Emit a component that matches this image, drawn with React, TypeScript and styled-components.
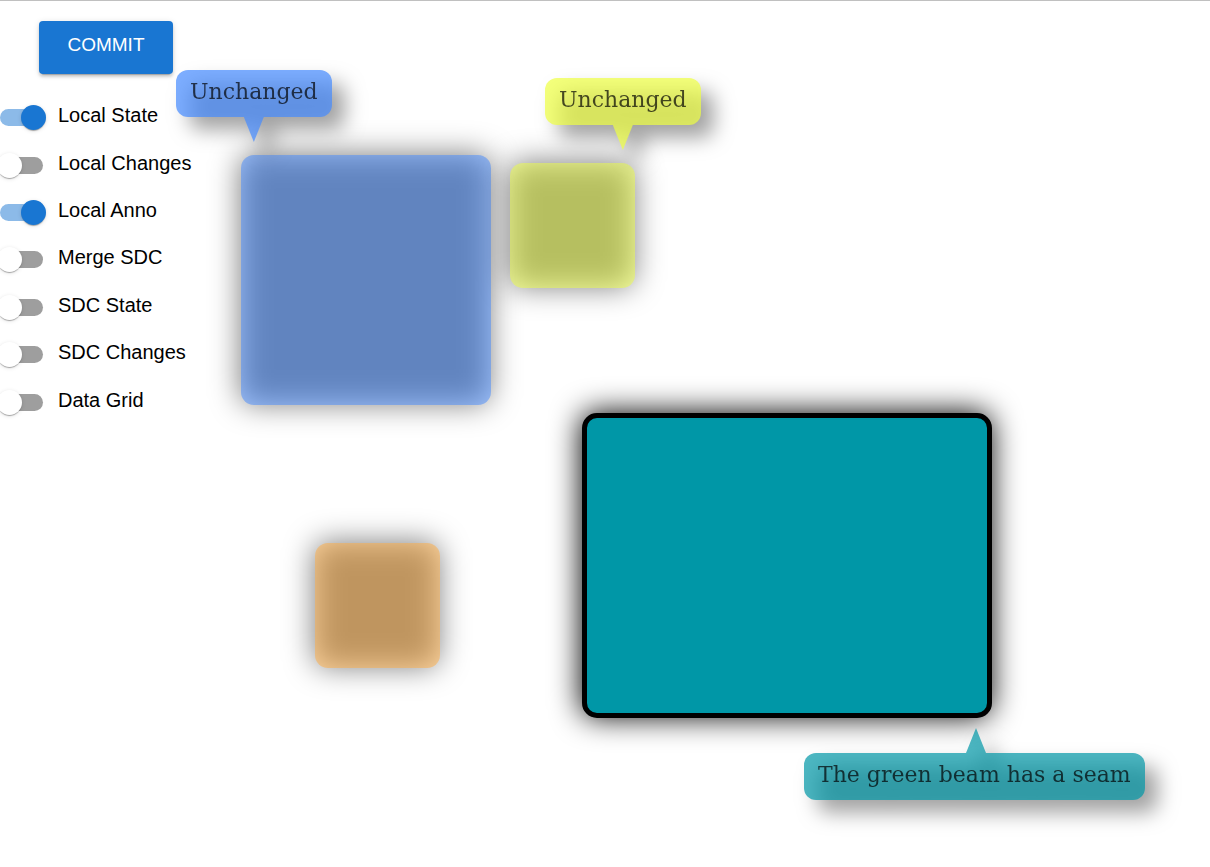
import React, { useState } from "react";
import styled, { createGlobalStyle, css } from "styled-components";

const GlobalStyle = createGlobalStyle`
  * { box-sizing: border-box; }
  body {
    margin: 0;
    background: #fff;
    color: #000;
    font-family: "Liberation Sans", Arial, sans-serif;
  }
`;

const Page = styled.div`
  display: grid;
  min-height: 100vh;
  border-top: 1px solid #c0c0c0;
  overflow: hidden;
`;

const Sidebar = styled.aside`
  grid-area: 1 / 1;
  justify-self: start;
  display: flex;
  flex-direction: column;
  align-items: flex-start;
  gap: 20px;
  padding-top: 20px;
`;

const CommitButton = styled.button`
  min-width: 134px;
  margin-left: 39px;
  padding: 10px 28px 16px;
  border: 0;
  border-radius: 4px;
  background: #1976d2;
  color: #fff;
  font-family: inherit;
  font-size: 19px;
  line-height: 27px;
  text-transform: uppercase;
  cursor: pointer;
  box-shadow:
    0 4px 1px -3px rgba(0, 0, 0, 0.2),
    0 3px 3px rgba(0, 0, 0, 0.14),
    0 1px 6px rgba(0, 0, 0, 0.12);
`;

const SwitchList = styled.div`
  display: grid;
  grid-auto-rows: 1fr;
  min-height: 332px;
`;

const SwitchRow = styled.label`
  display: flex;
  align-items: center;
  gap: 15px;
  font-size: 20px;
  line-height: 30px;
  cursor: pointer;
`;

const SwitchInput = styled.input`
  appearance: none;
  position: relative;
  width: 43px;
  height: 17px;
  margin: 0;
  border-radius: 9px;
  background: #9e9e9e;
  cursor: pointer;

  &::before {
    content: "";
    position: absolute;
    top: -4px;
    left: -3px;
    width: 25px;
    height: 25px;
    border-radius: 50%;
    background: #fff;
    box-shadow:
      0 3px 1px -2px rgba(0, 0, 0, 0.2),
      0 1px 1px rgba(0, 0, 0, 0.14),
      0 1px 4px rgba(0, 0, 0, 0.12);
  }

  &:checked {
    background: #8cbae8;
  }

  &:checked::before {
    left: 21px;
    background: #1976d2;
  }
`;

const SwitchText = styled.span`
  padding-bottom: 5px;
`;

const Canvas = styled.main`
  grid-area: 1 / 1;
  position: relative;
  min-height: 820px;
  pointer-events: none;
`;

const Shape = styled.div<{ $x: number; $y: number; $w: number; $h: number; $rgb: string; $selected?: boolean }>`
  position: absolute;
  left: ${(p) => p.$x}px;
  top: ${(p) => p.$y}px;
  width: ${(p) => p.$w}px;
  height: ${(p) => p.$h}px;
  border-radius: 13px;
  background: rgba(${(p) => p.$rgb}, 0.5);
  filter: drop-shadow(-1px -1px 15px #000);
  ${(p) =>
    p.$selected &&
    css`
      border: 5px solid #000;
      border-radius: 15px;
      background: rgb(${p.$rgb});
    `}
`;

const Callout = styled.div<{ $x: number; $y: number; $rgb: string; $up?: boolean }>`
  position: absolute;
  left: ${(p) => p.$x}px;
  top: ${(p) => p.$y}px;
  padding: 1px 14px 4px;
  border-radius: 12px;
  background: rgba(${(p) => p.$rgb}, 0.7);
  color: rgba(0, 0, 0, 0.7);
  font-family: "DejaVu Serif", serif;
  font-size: 22px;
  line-height: 42px;
  white-space: nowrap;
  filter: drop-shadow(13px 13px 10px rgba(0, 0, 0, 0.5));

  &::after {
    content: "";
    position: absolute;
    left: calc(50% - 10px);
    width: 20px;
    height: 25px;
    background: rgba(${(p) => p.$rgb}, 0.7);
    ${(p) =>
      p.$up
        ? css`
            bottom: 100%;
            left: 162px;
            clip-path: polygon(0 100%, 50% 0, 100% 100%);
          `
        : css`
            top: 100%;
            clip-path: polygon(0 0, 100% 0, 50% 100%);
          `}
  }
`;

const BLUE = "68, 138, 255";
const LIME = "238, 255, 65";
const ORANGE = "255, 171, 64";
const TEAL = "0, 151, 167";

const OPTIONS = [
  { label: "Local State", on: true },
  { label: "Local Changes", on: false },
  { label: "Local Anno", on: true },
  { label: "Merge SDC", on: false },
  { label: "SDC State", on: false },
  { label: "SDC Changes", on: false },
  { label: "Data Grid", on: false },
];

function Toggle({ label, initial }: { label: string; initial: boolean }) {
  const [on, setOn] = useState(initial);
  return (
    <SwitchRow>
      <SwitchInput type="checkbox" checked={on} onChange={(e) => setOn(e.target.checked)} />
      <SwitchText>{label}</SwitchText>
    </SwitchRow>
  );
}

export default function App() {
  return (
    <>
      <GlobalStyle />
      <Page>
        <Sidebar>
          <CommitButton type="button">Commit</CommitButton>
          <SwitchList>
            {OPTIONS.map((o) => (
              <Toggle key={o.label} label={o.label} initial={o.on} />
            ))}
          </SwitchList>
        </Sidebar>
        <Canvas>
          <Shape $x={241} $y={154} $w={250} $h={250} $rgb={BLUE} />
          <Shape $x={510} $y={162} $w={125} $h={125} $rgb={LIME} />
          <Shape $x={315} $y={542} $w={125} $h={125} $rgb={ORANGE} />
          <Shape $x={582} $y={412} $w={410} $h={305} $rgb={TEAL} $selected />
          <Callout $x={176} $y={69} $rgb={BLUE}>Unchanged</Callout>
          <Callout $x={545} $y={77} $rgb={LIME}>Unchanged</Callout>
          <Callout $x={804} $y={752} $rgb={TEAL} $up>The green beam has a seam</Callout>
        </Canvas>
      </Page>
    </>
  );
}
